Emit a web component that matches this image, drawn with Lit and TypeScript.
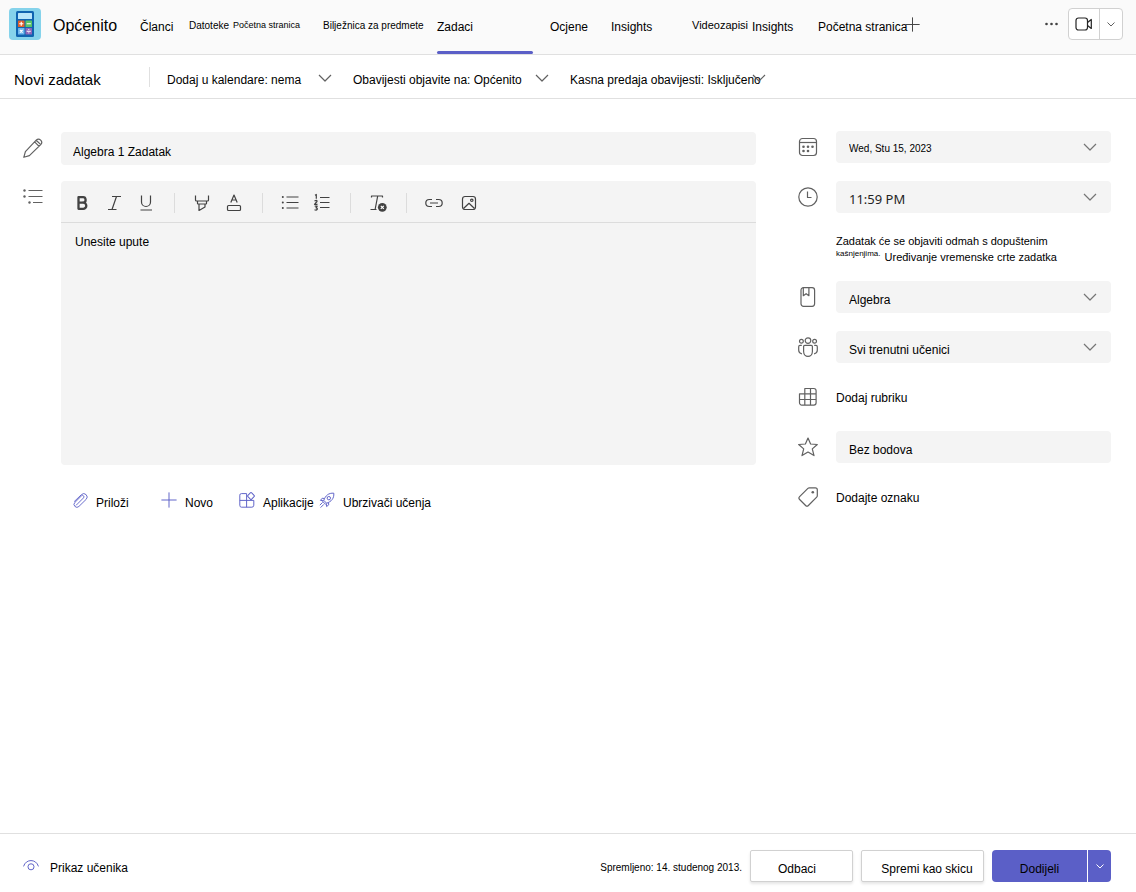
import { LitElement, html, css, svg } from "lit";
import { customElement } from "lit/decorators.js";

const chevron = html`<svg class="chev" width="14" height="8" viewBox="0 0 14 8" aria-hidden="true"><path d="M1 1l6 6 6-6" /></svg>`;

const icon = (body: unknown, size = 20, cls = "ico") =>
  html`<svg class=${cls} width=${size} height=${size} viewBox="0 0 20 20" aria-hidden="true">${body}</svg>`;

const pencil = svg`<path d="M13.2 2.2a3.1 3.1 0 0 1 4.5 4.4L6.4 17.6.8 19.3l1.6-5.7zM11.6 3.8l4.5 4.5M13.2 2.2l4.6 4.4" />`;
const lines = svg`<path d="M5.5 3.5h14M5.5 9.5h14M10 15.5h9.5" /><g class="fill"><circle cx="1.5" cy="3.5" r="1.2" /><circle cx="1.5" cy="9.5" r="1.2" /><circle cx="6.5" cy="15.5" r="1.2" /></g>`;
const calendar = svg`<rect x="1.5" y="1.5" width="17" height="17" rx="3" /><path d="M1.5 5.5h17" /><g class="fill"><circle cx="5.500" cy="9.800" r="1.300" /><circle cx="10" cy="9.800" r="1.300" /><circle cx="14.500" cy="9.800" r="1.300" /><circle cx="5.500" cy="14" r="1.300" /><circle cx="10" cy="14" r="1.300" /></g>`;
const clock = svg`<circle cx="10" cy="10" r="9.2" /><path d="M9.5 4.5v6h4" />`;
const book = svg`<rect x="3" y=".7" width="13.6" height="18.6" rx="2.5" /><path d="M5.3.7v8l2.8-2 2.8 2v-8" />`;
const people = svg`<circle cx="10" cy="3.6" r="2.8" /><circle cx="3.4" cy="4.2" r="1.9" /><circle cx="16.6" cy="4.2" r="1.9" /><path d="M5.6 9.6q0-1.2 1.2-1.2h6.4q1.2 0 1.2 1.2v5a4.4 4.8 0 0 1-8.8 0zM3.8 8.4H2q-1.3 0-1.3 1.3v3.6q0 3 3.2 3.5M16.2 8.4H18q1.3 0 1.3 1.3v3.6q0 3-3.2 3.5" />`;
const rubric = svg`<path d="M6.8 1.5h9a2.3 2.3 0 0 1 2.3 2.3v12a2.3 2.3 0 0 1-2.3 2.3h-12a2.3 2.3 0 0 1-2.3-2.3V6.8h5.3zM6.8 6.8h11.3M1.5 12.5h16.6M6.8 6.8v11.3M12.5 1.5v16.6" />`;
const star = svg`<path d="M10 1l2.6 6 6.7.5-5 4.4 1.7 6.7-6-3.6-6 3.6 1.700-6.700-5-4.400L7.400 7z" />`;
const tag = svg`<path d="M11.300.8h6q2 0 2 2v6q0 .8-.6 1.400l-8.300 8.300q-1.400 1.400-2.800 0l-6-6q-1.400-1.400 0-2.800l8.300-8.300q.6-.6 1.400-.6z" /><circle class="fill" cx="14.800" cy="5.300" r="1.300" />`;

const bold = svg`<path class="bold" d="M6.500 4.200v11.600h4.700a3.100 3.100 0 0 0 0-6.200 2.700 2.700 0 0 0-.6-5.400zM6.500 9.600h4.500" />`;
const italic = svg`<path d="M8 3.500h9M4 16.500h8.500M12.500 3.500l-4.500 13" />`;
const underline = svg`<path d="M5.500 2.500v6.500a4.500 4.500 0 0 0 9 0v-6.500M4.500 17h11.500" />`;
const highlight = svg`<path d="M3.500 2.500v4.500q0 1 1 1h11q1 0 1-1v-4.500M5.500 8v2.500q0 .5.5.5h8q.5 0 .5-.5V8M7 11v6.500l6-3.500v-3" />`;
const fontColor = svg`<path d="M6.800 9.500L10 2l3.200 7.500M7.900 7h4.200" /><rect x="3.500" y="12.500" width="13" height="5" rx="1" />`;
const bullets = svg`<path d="M6.500 4h12M6.500 9.500h12M6.500 15h12" /><g class="fill"><circle cx="2.800" cy="4" r="1" /><circle cx="2.800" cy="9.500" r="1" /><circle cx="2.800" cy="15" r="1" /></g>`;
const numbers = svg`<path d="M8 4.500h9.500M8 9.500h9.500M8 14.500h9.500M3 2.200l1.300-.7v4.300M2.500 8q2.700-1.500 2.500.5l-2.500 2.800h3M2.700 13.200h2.500l-1.200 1.600q1.800.2 1.200 1.600-.8 1.200-2.700.3" />`;
const clearFormat = svg`<path d="M3.500 4.500v-1.500h11v1.500M9.700 3l-2.500 13M2.500 16.500h6" /><circle class="fill" cx="14.300" cy="14.300" r="4.400" /><path class="cut" d="M12.800 12.800l3 3M15.800 12.800l-3 3" />`;
const link = svg`<path d="M8 6.500H5.300a3.500 3.500 0 0 0 0 7H8M12 6.500h2.700a3.500 3.500 0 0 1 0 7H12M6 10h8" />`;
const picture = svg`<rect x="3.500" y="3.500" width="13" height="13" rx="2.500" /><path d="M4.500 15.500L10 10.300l5.500 5.200" /><circle cx="12.800" cy="7.300" r="1.200" />`;

const clip = svg`<path d="M6 14.500L14 6.500a1.900 1.900 0 0 0-2.700-2.700L2.500 12.500M6 14.500l-2 2M2.500 12.500a3.800 3.800 0 0 0 5.400 5.400L17.500 8.500a4.400 4.400 0 0 0-6.300-6.300L1.500 11.500" />`;
const plus = svg`<path d="M10 .5v19M.5 10h19" />`;
const apps = svg`<path d="M9.500 2H3Q1 2 1 4v12.500q0 2.500 2 2.500h13q2.500 0 2.500-2.500v-6H1M9.500 2v17" /><rect x="11.700" y="1.700" width="6.600" height="6.600" rx="1.200" transform="rotate(45 15 5)" />`;
const rocket = svg`<path d="M6 10.500C8 4.500 12 1 18.500 1.500 19 8 15.500 12 9.500 14zM6.800 8.200L4 7.800 1.800 10.500l4.200.5M11.800 13.200l.4 2.800-2.700 2.200L9 14M4.500 13L1 16.500M6 15.500L2 19.500M4.300 11.500l4.200 4.200" /><circle cx="12.300" cy="7.700" r="2.100" />`;
const eye = svg`<path d="M.7 10.500C3.500.8 16.500.8 19.300 10.500" /><circle cx="10" cy="11" r="3.800" />`;

@customElement("app-root")
export class AppRoot extends LitElement {
  static styles = css`
    :host {
      display: flex;
      flex-direction: column;
      min-height: 100vh;
      background: #fff;
      color: #000;
      font: 12px/16px "Liberation Sans", Arial, sans-serif;
    }
    * { box-sizing: border-box; }
    a { color: inherit; text-decoration: none; }
    button, input, select, textarea {
      font: inherit;
      color: inherit;
      border: 0;
      margin: 0;
      padding: 0;
      background: none;
    }
    button, a { white-space: nowrap; }
    svg {
      display: block;
      flex: none;
      fill: none;
      stroke: #616161;
      stroke-width: 1.2;
      stroke-linejoin: round;
    }
    .fill { fill: #616161; stroke: none; }

    .top {
      display: flex;
      align-items: center;
      height: 55px;
      padding: 0 13px 0 9px;
      background: #fafafa;
      border-bottom: 1px solid #e0e0e0;
    }
    .logo { margin-bottom: 6px; stroke: none; }
    .channel {
      width: 87px;
      margin: 0 0 2px 12px;
      font-size: 16px;
      font-weight: 400;
      line-height: 20px;
    }
    .tabs {
      display: grid;
      grid-template-columns: 49px 44px 90px 114px 113px 61px 81px 60px 66px 87px;
      align-self: stretch;
    }
    .tab { line-height: 54px; height: 54px; }
    .tab.small { font-size: 10px; line-height: 52px; }
    .tab.tiny { font-size: 9px; line-height: 50px; }
    .tab.mid { font-size: 11px; line-height: 50px; }
    .tab.on { position: relative; width: 96px; }
    .tab.on::after {
      content: "";
      position: absolute;
      inset: auto 0 0;
      height: 3px;
      border-radius: 2px;
      background: #5b5fc7;
    }
    .add { margin-bottom: 6px; }
    .add svg { stroke: #424242; stroke-width: 1.3; }
    .tools {
      display: flex;
      align-items: center;
      gap: 10px;
      margin: 0 0 6px auto;
    }
    .tools .dots { fill: #424242; stroke: none; }
    .meet {
      display: flex;
      height: 32px;
      border: 1px solid #d1d1d1;
      border-radius: 4px;
      background: #fff;
    }
    .meet button { display: grid; place-items: center; width: 30px; }
    .meet button + button { width: 23px; border-left: 1px solid #d1d1d1; }
    .meet .cam { stroke: #242424; }

    .bar {
      display: flex;
      align-items: center;
      height: 44px;
      padding: 0 14px;
      border-bottom: 1px solid #e0e0e0;
    }
    .title {
      width: 135px;
      margin: 0;
      padding-top: 6px;
      font-size: 15px;
      font-weight: 400;
      line-height: 20px;
      height: 26px;
      white-space: nowrap;
    }
    .opts {
      display: flex;
      gap: 21px;
      border-left: 1px solid #e0e0e0;
      padding-left: 17px;
      height: 20px;
    }
    .opt { display: flex; align-items: center; padding-top: 2px; text-align: left; }
    .opt span { flex: 1; min-width: 0; padding-top: 5px; }
    .opt.a { width: 165px; }
    .opt.b { width: 196px; }

    .main {
      flex: 1;
      display: grid;
      grid-template-columns: minmax(0, 1fr) 313px;
      gap: 42px;
      align-items: start;
      padding: 32px 25px 32px 23px;
    }
    .left {
      display: grid;
      grid-template-columns: 38px minmax(0, 1fr);
      row-gap: 16px;
      padding-top: 1px;
    }
    .left > .ico { margin-top: 6px; }
    .name {
      height: 33px;
      padding: 6px 12px 0;
      border-radius: 4px;
      background: #f4f4f4;
    }
    .editor { border-radius: 4px; background: #f4f4f4; }
    .format {
      display: flex;
      align-items: center;
      height: 42px;
      padding: 2px 0 0 5px;
      border-bottom: 1px solid #dcdcdc;
    }
    .format button { display: grid; place-items: center; width: 32px; height: 32px; }
    .format svg { stroke: #424242; }
    .format .fill { fill: #424242; }
    .format .bold { stroke-width: 2.300; }
    .format .cut { stroke: #fff; }
    .sep { width: 1px; height: 20px; margin: 0 11px 0 12px; background: #dcdcdc; }
    .insert { display: flex; gap: 3px; }
    .editor textarea {
      display: block;
      width: 100%;
      height: 242px;
      padding: 11px 14px;
      resize: none;
    }
    .editor textarea::placeholder { color: #000; opacity: 1; }
    .attach {
      grid-column: 2;
      display: grid;
      grid-template-columns: 88px 78px 80px auto;
      justify-content: start;
      margin: 8px 0 0 12px;
    }
    .act { display: flex; align-items: center; gap: 8px; height: 22px; }
    .act svg { stroke: #5b5fc7; stroke-width: 1.200; }
    .act span { padding-top: 5px; }

    .right {
      display: grid;
      grid-template-columns: 38px minmax(0, 1fr);
      grid-auto-rows: minmax(32px, auto);
      row-gap: 18px;
      align-items: center;
    }
    .field { position: relative; }
    .field select, .field input {
      display: block;
      width: 100%;
      height: 32px;
      padding: 5px 13px 0;
      border-radius: 4px;
      background: #f4f4f4;
      appearance: none;
    }
    .field .chev { position: absolute; right: 14px; top: 12px; pointer-events: none; stroke: #757575; }
    .field .date { font-size: 10px; padding-top: 3px; }
    .field .time {
      padding-top: 4px;
      color: #242424;
      font-family: "Noto Sans", sans-serif;
      font-size: 13px;
    }
    .note { grid-column: 2; height: 32px; margin: 0; padding-top: 2px; font-size: 11px; }
    .note small { font-size: 8px; line-height: 10px; vertical-align: top; margin-right: 1px; }
    .plain { justify-self: start; padding-top: 2px; }

    .foot {
      display: flex;
      align-items: center;
      gap: 8px;
      height: 59px;
      padding: 6px 25px 0 23px;
      border-top: 1px solid #e0e0e0;
    }
    .view { display: flex; align-items: center; gap: 11px; }
    .view svg { stroke: #5b5fc7; }
    .view span { padding-top: 3px; }
    .saved { margin: 4px 0 0 auto; font-size: 10px; white-space: nowrap; }
    .btn {
      height: 32px;
      padding: 5px 0 0;
      border: 1px solid #d1d1d1;
      border-radius: 2px;
      background: #fff;
      box-shadow: 0 2px 3px rgba(0, 0, 0, 0.1);
    }
    .discard { width: 103px; padding-right: 9px; }
    .draft { width: 123px; padding-left: 9px; }
    .split { display: flex; height: 32px; border-radius: 4px; overflow: hidden; }
    .split button { background: #5b5fc7; }
    .assign { width: 95px; padding-top: 5px; }
    .more { display: grid; place-items: center; width: 24px; border-left: 1px solid #fff; }
    .more svg { stroke: #fff; }
    .small-chev { stroke-width: 1; }
  `;

  private field(label: string, value: string, cls = "") {
    return html`<div class="field">
      <select class=${cls} aria-label=${label}><option>${value}</option></select>${chevron}
    </div>`;
  }

  private tool(label: string, body: unknown) {
    return html`<button type="button" aria-label=${label}>${icon(body)}</button>`;
  }

  render() {
    const small = html`<svg class="small-chev" width="8" height="5" viewBox="0 0 8 5" aria-hidden="true"><path d="M.5.5L4 4 7.500.5" /></svg>`;
    return html`
      <header class="top">
        <svg class="logo" width="32" height="32" viewBox="0 0 32 32" aria-hidden="true">
          <rect width="32" height="32" rx="4" fill="#85d3eb" />
          <rect x="7" y="3" width="18" height="26" rx="1.500" fill="#0f64b0" />
          <rect x="9" y="5" width="14" height="6" rx=".5" fill="#b9e6fa" />
          <rect x="9" y="12.500" width="6.500" height="6.500" rx=".5" fill="#e0602c" />
          <rect x="16.500" y="12.500" width="6.500" height="6.500" rx=".5" fill="#5ac466" />
          <rect x="9" y="20" width="6.500" height="6.500" rx=".5" fill="#6cb6ee" />
          <rect x="16.500" y="20" width="6.500" height="6.500" rx=".5" fill="#8d66b8" />
          <path d="M10.200 15.750h4.100M12.250 13.700v4.100M17.700 15.750h4.100M10.900 21.900l2.700 2.700M13.600 21.900l-2.700 2.700M17.700 23.250h4.100M19.750 21.200v.8M19.750 24.500v.8" stroke="#fff" stroke-width="1.200" />
        </svg>
        <h1 class="channel">Općenito</h1>
        <nav class="tabs">
          <a class="tab" href="#">Članci</a>
          <a class="tab small" href="#">Datoteke</a>
          <a class="tab tiny" href="#">Početna stranica</a>
          <a class="tab small" href="#">Bilježnica za predmete</a>
          <a class="tab on" href="#" aria-current="page">Zadaci</a>
          <a class="tab" href="#">Ocjene</a>
          <a class="tab" href="#">Insights</a>
          <a class="tab mid" href="#">Videozapisi</a>
          <a class="tab" href="#">Insights</a>
          <a class="tab" href="#">Početna stranica</a>
        </nav>
        <button class="add" type="button" aria-label="Dodaj karticu">${icon(plus, 15)}</button>
        <div class="tools">
          <button type="button" aria-label="Više">
            <svg class="dots" width="13" height="4" viewBox="0 0 13 4"><circle cx="1.500" cy="2" r="1.300" /><circle cx="6.500" cy="2" r="1.300" /><circle cx="11.500" cy="2" r="1.300" /></svg>
          </button>
          <div class="meet">
            <button type="button" aria-label="Sastanak">
              <svg class="cam" width="18" height="14" viewBox="0 0 18 14"><rect x="1" y="1" width="11.500" height="12" rx="2.500" /><path d="M12.500 5.500l3.800-3v9l-3.800-3" /></svg>
            </button>
            <button type="button" aria-label="Mogućnosti sastanka">${small}</button>
          </div>
        </div>
      </header>

      <div class="bar">
        <h2 class="title">Novi zadatak</h2>
        <div class="opts">
          <button class="opt a" type="button"><span>Dodaj u kalendare: nema</span>${chevron}</button>
          <button class="opt b" type="button"><span>Obavijesti objavite na: Općenito</span>${chevron}</button>
          <button class="opt b" type="button"><span>Kasna predaja obavijesti: Isključeno</span>${chevron}</button>
        </div>
      </div>

      <main class="main">
        <section class="left">
          ${icon(pencil)}
          <input class="name" type="text" aria-label="Naslov" .value=${"Algebra 1 Zadatak"} />
          ${icon(lines)}
          <div class="editor">
            <div class="format">
              ${this.tool("Podebljano", bold)}${this.tool("Kurziv", italic)}${this.tool("Podcrtano", underline)}
              <i class="sep"></i>
              ${this.tool("Isticanje", highlight)}${this.tool("Boja fonta", fontColor)}
              <i class="sep"></i>
              ${this.tool("Grafičke oznake", bullets)}${this.tool("Numeriranje", numbers)}
              <i class="sep"></i>
              ${this.tool("Očisti oblikovanje", clearFormat)}
              <i class="sep"></i>
              <div class="insert">${this.tool("Veza", link)}${this.tool("Slika", picture)}</div>
            </div>
            <textarea aria-label="Upute" placeholder="Unesite upute"></textarea>
          </div>
          <div class="attach">
            <button class="act" type="button">${icon(clip, 15)}<span>Priloži</span></button>
            <button class="act" type="button">${icon(plus, 16)}<span>Novo</span></button>
            <button class="act" type="button">${icon(apps, 16)}<span>Aplikacije</span></button>
            <button class="act" type="button">${icon(rocket, 16)}<span>Ubrzivači učenja</span></button>
          </div>
        </section>

        <section class="right">
          ${icon(calendar)}${this.field("Datum", "Wed, Stu 15, 2023", "date")}
          ${icon(clock)}${this.field("Vrijeme", "11:59 PM", "time")}
          <p class="note">Zadatak će se objaviti odmah s dopuštenim<br /><small>kašnjenjima.</small> <a href="#">Uređivanje vremenske crte zadatka</a></p>
          ${icon(book)}${this.field("Predmet", "Algebra")}
          ${icon(people)}${this.field("Učenici", "Svi trenutni učenici")}
          ${icon(rubric)}<button class="plain" type="button">Dodaj rubriku</button>
          ${icon(star)}
          <div class="field"><input type="text" aria-label="Bodovi" .value=${"Bez bodova"} /></div>
          ${icon(tag)}<button class="plain" type="button">Dodajte oznaku</button>
        </section>
      </main>

      <footer class="foot">
        <button class="view" type="button">${icon(eye, 16)}<span>Prikaz učenika</span></button>
        <p class="saved">Spremljeno: 14. studenog 2013.</p>
        <button class="btn discard" type="button">Odbaci</button>
        <button class="btn draft" type="button">Spremi kao skicu</button>
        <div class="split">
          <button class="assign" type="button">Dodijeli</button>
          <button class="more" type="button" aria-label="Više mogućnosti">${small}</button>
        </div>
      </footer>
    `;
  }
}
